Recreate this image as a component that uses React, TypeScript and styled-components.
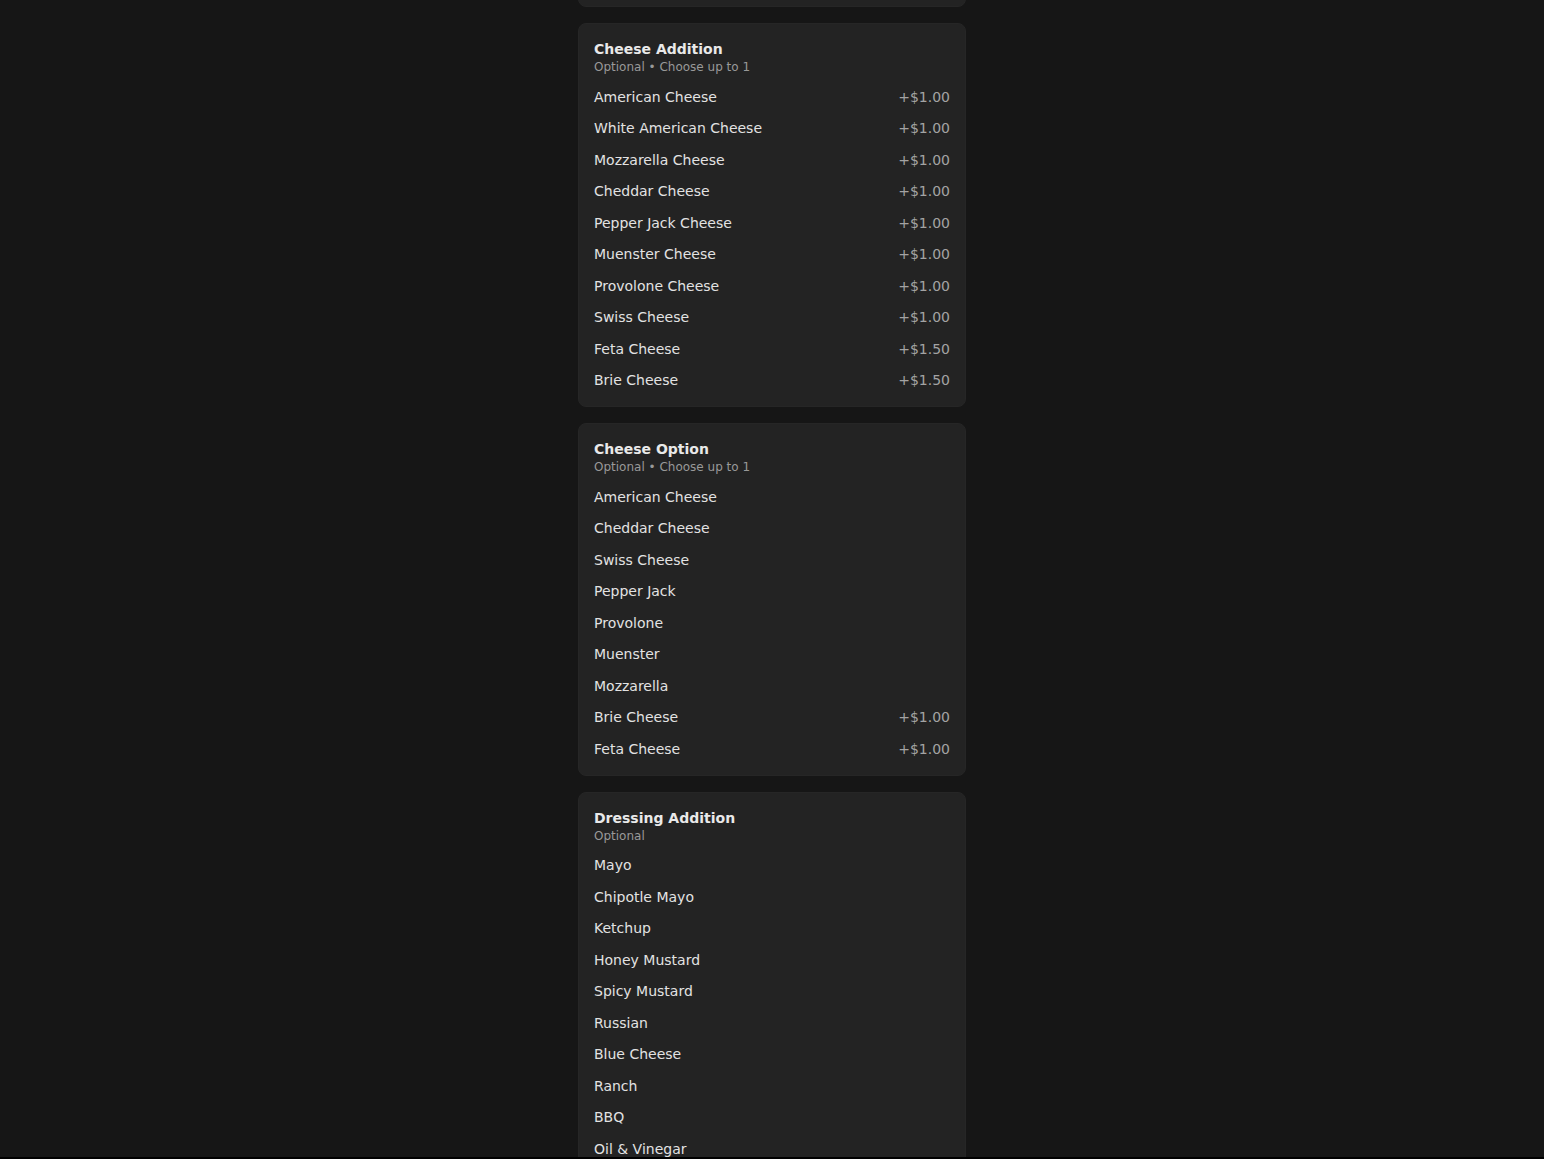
import React from "react";
import styled, { createGlobalStyle } from "styled-components";

const GlobalStyle = createGlobalStyle`
  html, body {
    margin: 0;
    padding: 0;
    background: #161616;
    font-family: "DejaVu Sans", "Noto Sans", sans-serif;
    -webkit-font-smoothing: antialiased;
  }
`;

const Page = styled.div`
  min-height: 100vh;
  display: flex;
  justify-content: center;
  overflow: hidden;
`;

const Stack = styled.div`
  width: 388px;
  display: flex;
  flex-direction: column;
  gap: 16px;
  margin-top: -188px;
  padding-bottom: 40px;
`;

const Card = styled.section`
  background: #232323;
  border: 1px solid #262626;
  border-radius: 8px;
  padding: 17px 15px 10px;
`;

const Header = styled.header`
  display: flex;
  flex-direction: column;
  gap: 2px;
  margin-bottom: 6px;
`;

const Title = styled.h3`
  margin: 0;
  font-size: 14px;
  line-height: 16px;
  font-weight: 700;
  color: #e9e9e9;
`;

const Subtitle = styled.div`
  font-size: 12px;
  line-height: 16px;
  color: #999999;
`;

const List = styled.ul`
  list-style: none;
  margin: 0;
  padding: 0;
  display: flex;
  flex-direction: column;
`;

const Row = styled.li`
  height: 31.5px;
  display: flex;
  align-items: center;
  justify-content: space-between;
  font-size: 14px;
  color: #e2e2e2;
`;

const Price = styled.span`
  color: #a3a3a3;
  font-size: 14px;
`;

const BottomEdge = styled.div`
  position: fixed;
  left: 0;
  right: 0;
  bottom: 0;
  height: 2px;
  background: #000;
`;

type Item = { name: string; price?: string };
type Group = { title: string; subtitle: string; items: Item[] };

const groups: Group[] = [
  {
    title: "Bread Choice",
    subtitle: "Required • Choose 1",
    items: [
      { name: "Roll" },
      { name: "Hero" },
      { name: "Wrap" },
      { name: "Rye Bread" },
    ],
  },
  {
    title: "Cheese Addition",
    subtitle: "Optional • Choose up to 1",
    items: [
      { name: "American Cheese", price: "+$1.00" },
      { name: "White American Cheese", price: "+$1.00" },
      { name: "Mozzarella Cheese", price: "+$1.00" },
      { name: "Cheddar Cheese", price: "+$1.00" },
      { name: "Pepper Jack Cheese", price: "+$1.00" },
      { name: "Muenster Cheese", price: "+$1.00" },
      { name: "Provolone Cheese", price: "+$1.00" },
      { name: "Swiss Cheese", price: "+$1.00" },
      { name: "Feta Cheese", price: "+$1.50" },
      { name: "Brie Cheese", price: "+$1.50" },
    ],
  },
  {
    title: "Cheese Option",
    subtitle: "Optional • Choose up to 1",
    items: [
      { name: "American Cheese" },
      { name: "Cheddar Cheese" },
      { name: "Swiss Cheese" },
      { name: "Pepper Jack" },
      { name: "Provolone" },
      { name: "Muenster" },
      { name: "Mozzarella" },
      { name: "Brie Cheese", price: "+$1.00" },
      { name: "Feta Cheese", price: "+$1.00" },
    ],
  },
  {
    title: "Dressing Addition",
    subtitle: "Optional",
    items: [
      { name: "Mayo" },
      { name: "Chipotle Mayo" },
      { name: "Ketchup" },
      { name: "Honey Mustard" },
      { name: "Spicy Mustard" },
      { name: "Russian" },
      { name: "Blue Cheese" },
      { name: "Ranch" },
      { name: "BBQ" },
      { name: "Oil & Vinegar" },
      { name: "Balsamic Vinaigrette" },
      { name: "Hot Sauce" },
    ],
  },
];

export default function App() {
  return (
    <>
      <GlobalStyle />
      <Page>
        <Stack>
          {groups.map((g) => (
            <Card key={g.title}>
              <Header>
                <Title>{g.title}</Title>
                <Subtitle>{g.subtitle}</Subtitle>
              </Header>
              <List>
                {g.items.map((it) => (
                  <Row key={it.name}>
                    <span>{it.name}</span>
                    {it.price && <Price>{it.price}</Price>}
                  </Row>
                ))}
              </List>
            </Card>
          ))}
        </Stack>
      </Page>
      <BottomEdge />
    </>
  );
}
